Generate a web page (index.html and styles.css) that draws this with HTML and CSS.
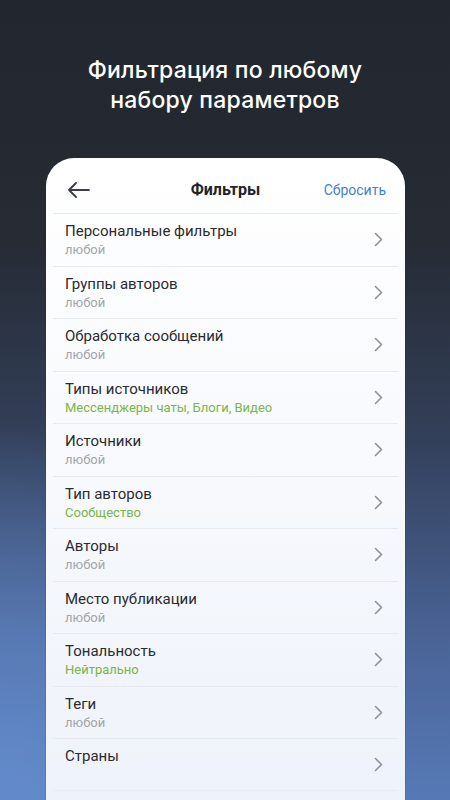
FILE: index.html
```html
<!DOCTYPE html>
<html lang="ru">
<head>
<meta charset="utf-8">
<link rel="stylesheet" href="styles.css">
</head>
<body>
<div class="screen">
  <h1 class="headline">Фильтрация по любому<br>набору параметров</h1>
  <div class="phone">
    <div class="topbar">
      <svg class="back" width="24" height="16" viewBox="0 0 24 16"><path d="M22 8H2M9 1L2 8l7 7" fill="none" stroke="#3a3d44" stroke-width="1.8" stroke-linecap="round" stroke-linejoin="round"/></svg>
      <div class="title">Фильтры</div>
      <div class="reset">Сбросить</div>
    </div>
    <ul class="list">
      <li class="row"><div class="txt"><div class="name">Персональные фильтры</div><div class="val">любой</div></div><svg class="chev" viewBox="0 0 9 15"><path d="M1.5 1.5l6 6-6 6" fill="none" stroke="#8d9199" stroke-width="1.6" stroke-linecap="round" stroke-linejoin="round"/></svg></li>
      <li class="row"><div class="txt"><div class="name">Группы авторов</div><div class="val">любой</div></div><svg class="chev" viewBox="0 0 9 15"><path d="M1.5 1.5l6 6-6 6" fill="none" stroke="#8d9199" stroke-width="1.6" stroke-linecap="round" stroke-linejoin="round"/></svg></li>
      <li class="row"><div class="txt"><div class="name">Обработка сообщений</div><div class="val">любой</div></div><svg class="chev" viewBox="0 0 9 15"><path d="M1.5 1.5l6 6-6 6" fill="none" stroke="#8d9199" stroke-width="1.6" stroke-linecap="round" stroke-linejoin="round"/></svg></li>
      <li class="row"><div class="txt"><div class="name">Типы источников</div><div class="val on">Мессенджеры чаты, Блоги, Видео</div></div><svg class="chev" viewBox="0 0 9 15"><path d="M1.5 1.5l6 6-6 6" fill="none" stroke="#8d9199" stroke-width="1.6" stroke-linecap="round" stroke-linejoin="round"/></svg></li>
      <li class="row"><div class="txt"><div class="name">Источники</div><div class="val">любой</div></div><svg class="chev" viewBox="0 0 9 15"><path d="M1.5 1.5l6 6-6 6" fill="none" stroke="#8d9199" stroke-width="1.6" stroke-linecap="round" stroke-linejoin="round"/></svg></li>
      <li class="row"><div class="txt"><div class="name">Тип авторов</div><div class="val on">Сообщество</div></div><svg class="chev" viewBox="0 0 9 15"><path d="M1.5 1.5l6 6-6 6" fill="none" stroke="#8d9199" stroke-width="1.6" stroke-linecap="round" stroke-linejoin="round"/></svg></li>
      <li class="row"><div class="txt"><div class="name">Авторы</div><div class="val">любой</div></div><svg class="chev" viewBox="0 0 9 15"><path d="M1.5 1.5l6 6-6 6" fill="none" stroke="#8d9199" stroke-width="1.6" stroke-linecap="round" stroke-linejoin="round"/></svg></li>
      <li class="row"><div class="txt"><div class="name">Место публикации</div><div class="val">любой</div></div><svg class="chev" viewBox="0 0 9 15"><path d="M1.5 1.5l6 6-6 6" fill="none" stroke="#8d9199" stroke-width="1.6" stroke-linecap="round" stroke-linejoin="round"/></svg></li>
      <li class="row"><div class="txt"><div class="name">Тональность</div><div class="val on">Нейтрально</div></div><svg class="chev" viewBox="0 0 9 15"><path d="M1.5 1.5l6 6-6 6" fill="none" stroke="#8d9199" stroke-width="1.6" stroke-linecap="round" stroke-linejoin="round"/></svg></li>
      <li class="row"><div class="txt"><div class="name">Теги</div><div class="val">любой</div></div><svg class="chev" viewBox="0 0 9 15"><path d="M1.5 1.5l6 6-6 6" fill="none" stroke="#8d9199" stroke-width="1.6" stroke-linecap="round" stroke-linejoin="round"/></svg></li>
      <li class="row last"><div class="txt"><div class="name">Страны</div></div><svg class="chev" viewBox="0 0 9 15"><path d="M1.5 1.5l6 6-6 6" fill="none" stroke="#8d9199" stroke-width="1.6" stroke-linecap="round" stroke-linejoin="round"/></svg></li>
    </ul>
  </div>
</div>
</body>
</html>
```

FILE: styles.css
```css
html, body {
  margin: 0;
  padding: 0;
}
body {
  width: 450px;
  height: 800px;
  overflow: hidden;
  font-family: Roboto, "Noto Sans", sans-serif;
}
.screen {
  width: 450px;
  height: 800px;
  overflow: hidden;
  display: flex;
  flex-direction: column;
  align-items: center;
  background:
    radial-gradient(ellipse 420px 380px at 0% 100%, rgba(100,140,205,0.9), rgba(100,140,205,0) 100%),
    linear-gradient(180deg, #22262e 0%, #262b34 30%, #33405a 55%, #4a6497 80%, #5679b6 100%);
}
.headline {
  margin: 55px 0 0;
  font-family: Inter, "Noto Sans", sans-serif;
  font-weight: 500;
  font-size: 23px;
  line-height: 30px;
  color: #ffffff;
  text-align: center;
  letter-spacing: 0.2px;
}
.phone {
  margin-top: 43px;
  width: 359px;
  flex: 1;
  border-radius: 28px 28px 0 0;
  background: linear-gradient(180deg, #ffffff 0%, #f7f9fd 50%, #eef2fa 100%);
  box-shadow: 0 0 0 1px rgba(20,30,50,0.12);
  margin-left: 1px;
}
.topbar {
  height: 55px;
  box-sizing: border-box;
  padding: 8px 19px 0 21px;
  display: flex;
  align-items: center;
  position: relative;
}
.back {
  display: block;
}
.title {
  position: absolute;
  left: 0;
  right: 0;
  top: 8px;
  bottom: 0;
  display: flex;
  align-items: center;
  justify-content: center;
  font-weight: 700;
  font-size: 16px;
  color: #222326;
  pointer-events: none;
}
.reset {
  margin-left: auto;
  font-size: 14px;
  color: #3f7fd9;
}
.list {
  list-style: none;
  margin: 0 7px;
  padding: 0;
}
.row {
  height: 52.5px;
  box-sizing: border-box;
  border-top: 1px solid #e8eaee;
  display: flex;
  align-items: center;
  padding: 0 15px 0 12px;
}
.txt {
  flex: 1;
  align-self: flex-start;
  padding-top: 7px;
}
.name {
  font-size: 15px;
  line-height: 20px;
  color: #2a2b2e;
}
.val {
  font-size: 13px;
  line-height: 18px;
  color: #a3a6ab;
}
.val.on {
  color: #7ab646;
}
.chev {
  width: 9px;
  height: 15px;
  display: block;
}
.last {
  border-bottom: 1px solid #e9ecf2;
}
```
